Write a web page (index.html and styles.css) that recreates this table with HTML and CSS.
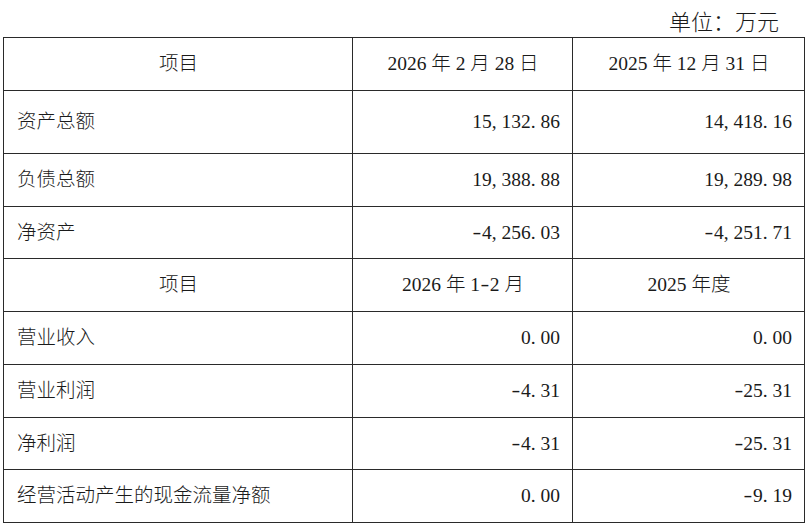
FILE: index.html
```html
<!DOCTYPE html>
<html lang="zh-CN">
<head>
<meta charset="utf-8">
<title>财务数据</title>
<link rel="stylesheet" href="styles.css">
</head>
<body>
<div class="unit">单位：万元</div>
<table class="fin">
  <colgroup>
    <col class="c1"><col class="c2"><col class="c3">
  </colgroup>
  <tr class="head">
    <td class="ctr">项目</td>
    <td class="ctr">2026 年 2 月 28 日</td>
    <td class="ctr">2025 年 12 月 31 日</td>
  </tr>
  <tr class="tall">
    <td>资产总额</td>
    <td class="num">15<span class="p">,</span>132<span class="p">.</span>86</td>
    <td class="num">14<span class="p">,</span>418<span class="p">.</span>16</td>
  </tr>
  <tr>
    <td>负债总额</td>
    <td class="num">19<span class="p">,</span>388<span class="p">.</span>88</td>
    <td class="num">19<span class="p">,</span>289<span class="p">.</span>98</td>
  </tr>
  <tr class="short">
    <td>净资产</td>
    <td class="num"><span class="m">-</span>4<span class="p">,</span>256<span class="p">.</span>03</td>
    <td class="num"><span class="m">-</span>4<span class="p">,</span>251<span class="p">.</span>71</td>
  </tr>
  <tr>
    <td class="ctr">项目</td>
    <td class="ctr">2026 年 1<span class="m">-</span>2 月</td>
    <td class="ctr">2025 年度</td>
  </tr>
  <tr>
    <td>营业收入</td>
    <td class="num">0<span class="p">.</span>00</td>
    <td class="num">0<span class="p">.</span>00</td>
  </tr>
  <tr>
    <td>营业利润</td>
    <td class="num"><span class="m">-</span>4<span class="p">.</span>31</td>
    <td class="num"><span class="m">-</span>25<span class="p">.</span>31</td>
  </tr>
  <tr class="short">
    <td>净利润</td>
    <td class="num"><span class="m">-</span>4<span class="p">.</span>31</td>
    <td class="num"><span class="m">-</span>25<span class="p">.</span>31</td>
  </tr>
  <tr>
    <td>经营活动产生的现金流量净额</td>
    <td class="num">0<span class="p">.</span>00</td>
    <td class="num"><span class="m">-</span>9<span class="p">.</span>19</td>
  </tr>
</table>
</body>
</html>
```
FILE: styles.css
```css
html, body {
  margin: 0;
  padding: 0;
  background: #ffffff;
}
body {
  font-family: "Liberation Serif", "Noto Sans CJK SC", serif;
  color: #1a1a1a;
  width: 807px;
  height: 525px;
  overflow: hidden;
}
.unit {
  box-sizing: border-box;
  height: 37px;
  padding: 12px 28px 0 0;
  font-size: 22px;
  line-height: 22px;
  text-align: right;
  font-weight: 300;
}
.fin {
  margin-left: 3px;
  width: 801px;
  table-layout: fixed;
  border-collapse: collapse;
  font-size: 19.5px;
  font-weight: 300;
}
.c1 { width: 349px; }
.c2 { width: 220px; }
.c3 { width: 232px; }
.fin td {
  border: 1px solid #2a2a2a;
  padding: 0 12px 0 13px;
  line-height: 22px;
  vertical-align: middle;
  white-space: nowrap;
}
.fin tr { height: 53px; }
.fin tr.tall { height: 63px; }
.fin tr.short { height: 52px; }
.fin td.ctr { text-align: center; }
.fin td.num { text-align: right; }
.p {
  display: inline-block;
  width: 0.5em;
  text-align: left;
}
.m {
  display: inline-block;
  width: 0.5em;
  text-align: center;
  transform: scaleX(1.35) translateY(-1px);
}
```
